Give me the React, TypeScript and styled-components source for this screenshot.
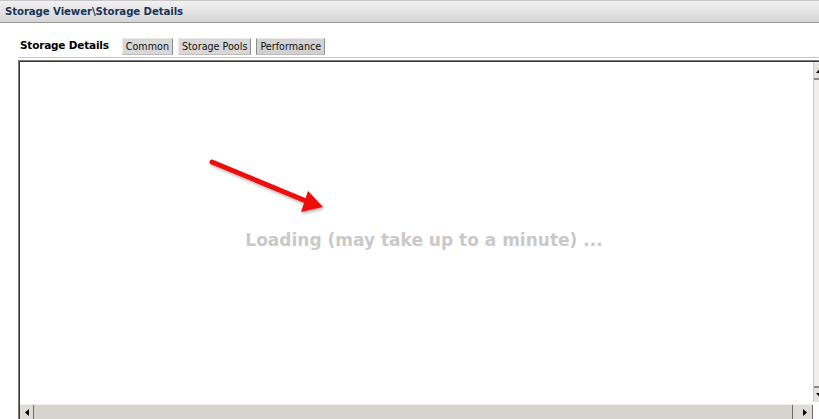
import React from "react";
import styled, { createGlobalStyle } from "styled-components";

const Global = createGlobalStyle`
  html, body { margin: 0; padding: 0; background: #ffffff; }
  body { overflow: hidden; }
`;

const Page = styled.div`
  width: 819px;
  height: 419px;
  overflow: hidden;
  display: flex;
  flex-direction: column;
  font-family: "DejaVu Sans", Verdana, sans-serif;
  background: #ffffff;
`;

const TitleBar = styled.div`
  flex: none;
  display: flex;
  align-items: center;
  padding-left: 5px;
  background: linear-gradient(#f2f2f2, #e2e2e2 55%, #d6d6d6);
  border-top: 1px solid #c8c8c8;
  border-bottom: 1px solid #969696;
  box-sizing: border-box;
  height: 23px;
`;

const Title = styled.span`
  font-size: 10.2px;
  font-weight: bold;
  color: #1b3558;
  letter-spacing: -0.1px;
  margin-top: -1px;
`;

const Body = styled.div`
  flex: 1;
  display: flex;
  flex-direction: column;
  padding-left: 18px;
  min-height: 0;
`;

const TabRow = styled.div`
  display: flex;
  align-items: center;
  height: 18px;
  margin-top: 14px;
  padding-left: 2px;
`;

const Heading = styled.span`
  font-size: 10.5px;
  font-weight: bold;
  color: #000;
  margin-right: 13px;
  margin-top: -2px;
  letter-spacing: -0.2px;
`;

const Tab = styled.button<{ $active?: boolean }>`
  height: 17px;
  padding: 0 3px;
  margin-right: 5px;
  font-family: "DejaVu Sans", Verdana, sans-serif;
  font-size: 9.6px;
  color: #111;
  background: ${(p) => (p.$active ? "#d2d2d2" : "#d8d8d8")};
  border: none;
  border-right: 1px solid #8c8c8c;
  border-left: ${(p) => (p.$active ? "1px solid #8c8c8c" : "1px solid #ececec")};
  border-top: 1px solid #e8e8e8;
  border-bottom: 1px solid #bdbdbd;
  box-sizing: border-box;
  display: flex;
  align-items: center;
`;

const Rule = styled.div`
  margin-top: 2px;
  height: 1px;
  background: #c4c4c4;
  flex: none;
`;

const RuleDark = styled.div`
  margin-top: 2px;
  height: 1px;
  background: #7a7a7a;
  flex: none;
`;

const Panel = styled.div`
  flex: 1;
  display: flex;
  flex-direction: column;
  border-left: 1px solid #7a7a7a;
  min-height: 0;
  width: 812px;
`;

const PanelInner = styled.div`
  flex: 1;
  display: flex;
  flex-direction: column;
  border-left: 1px solid #3c3c3c;
  border-top: 1px solid #3c3c3c;
  min-height: 0;
`;

const Main = styled.div`
  flex: 1;
  display: flex;
  min-height: 0;
`;

const Canvas = styled.div`
  position: relative;
  flex: none;
  width: 793px;
  display: flex;
  align-items: center;
  justify-content: center;
  background: #fff;
`;

const Loading = styled.span`
  font-size: 17px;
  font-weight: bold;
  color: #c9c9c9;
  margin-top: 14px;
  margin-left: 15px;
`;

const ArrowSvg = styled.svg`
  position: absolute;
  left: 180px;
  top: 89px;
`;

const VScroll = styled.div`
  width: 18px;
  flex: none;
  display: flex;
  flex-direction: column;
  background: #ebeae6;
  border-left: 1px solid #c8c8c8;
  margin-bottom: 2px;
`;

const VButton = styled.div`
  height: 14px;
  flex: none;
  background: #e4e3de;
  border-bottom: 2px solid #8a8a8a;
  display: flex;
  align-items: center;
  padding-left: 2px;
  margin-top: 2px;
`;

const VTrack = styled.div`
  flex: 1;
  background: #f0efeb;
`;

const VButtonBottom = styled(VButton)`
  border-bottom: none;
  border-top: 2px solid #8a8a8a;
  margin-top: 0;
`;

const HScroll = styled.div`
  height: 14px;
  flex: none;
  display: flex;
  background: #d8d6d0;
  border-top: 1px solid #f0efea;
  width: 793px;
`;

const HButton = styled.div<{ $side: "left" | "right" }>`
  width: ${(p) => (p.$side === "right" ? "21px" : "14px")};
  flex: none;
  display: flex;
  align-items: center;
  justify-content: ${(p) => (p.$side === "right" ? "flex-end" : "center")};
  padding-right: ${(p) => (p.$side === "right" ? "5px" : "0")};
  box-sizing: border-box;
  background: #dedcd6;
  border-right: 1px solid #6a6a6a;
  ${(p) => (p.$side === "right" ? "border-left: 1px solid #6a6a6a;" : "")}
`;

const HTrack = styled.div`
  flex: 1;
  background: #d6d4ce;
`;

const Tri = styled.svg``;

export default function App() {
  return (
    <>
      <Global />
      <Page>
        <TitleBar>
          <Title>Storage Viewer\Storage Details</Title>
        </TitleBar>
        <Body>
          <TabRow>
            <Heading>Storage Details</Heading>
            <Tab>Common</Tab>
            <Tab>Storage Pools</Tab>
            <Tab $active>Performance</Tab>
          </TabRow>
          <Rule />
          <RuleDark />
          <Panel>
            <PanelInner>
              <Main>
                <Canvas>
                  <ArrowSvg width="150" height="80" viewBox="0 0 150 80">
                    <defs>
                      <filter id="sh" x="-20%" y="-20%" width="140%" height="150%">
                        <feGaussianBlur in="SourceAlpha" stdDeviation="1.5" />
                        <feOffset dx="1" dy="2" result="o" />
                        <feComponentTransfer>
                          <feFuncA type="linear" slope="0.3" />
                        </feComponentTransfer>
                        <feMerge>
                          <feMergeNode />
                          <feMergeNode in="SourceGraphic" />
                        </feMerge>
                      </filter>
                    </defs>
                    <g filter="url(#sh)">
                      <line x1="12" y1="11" x2="106" y2="50" stroke="#ee0d0d" strokeWidth="5" strokeLinecap="round" />
                      <polygon points="123,56 101,61 108,40" fill="#ee0d0d" />
                    </g>
                  </ArrowSvg>
                  <Loading>Loading (may take up to a minute) ...</Loading>
                </Canvas>
                <VScroll>
                  <VButton>
                    <Tri width="7" height="4" viewBox="0 0 7 4">
                      <polygon points="0,4 3.5,0 7,4" fill="#000" />
                    </Tri>
                  </VButton>
                  <VTrack />
                  <VButtonBottom>
                    <Tri width="7" height="4" viewBox="0 0 7 4">
                      <polygon points="0,0 3.5,4 7,0" fill="#000" />
                    </Tri>
                  </VButtonBottom>
                </VScroll>
              </Main>
              <HScroll>
                <HButton $side="left">
                  <Tri width="4" height="7" viewBox="0 0 4 7">
                    <polygon points="4,0 0,3.5 4,7" fill="#000" />
                  </Tri>
                </HButton>
                <HTrack />
                <HButton $side="right">
                  <Tri width="4" height="7" viewBox="0 0 4 7">
                    <polygon points="0,0 4,3.5 0,7" fill="#000" />
                  </Tri>
                </HButton>
              </HScroll>
            </PanelInner>
          </Panel>
        </Body>
      </Page>
    </>
  );
}
